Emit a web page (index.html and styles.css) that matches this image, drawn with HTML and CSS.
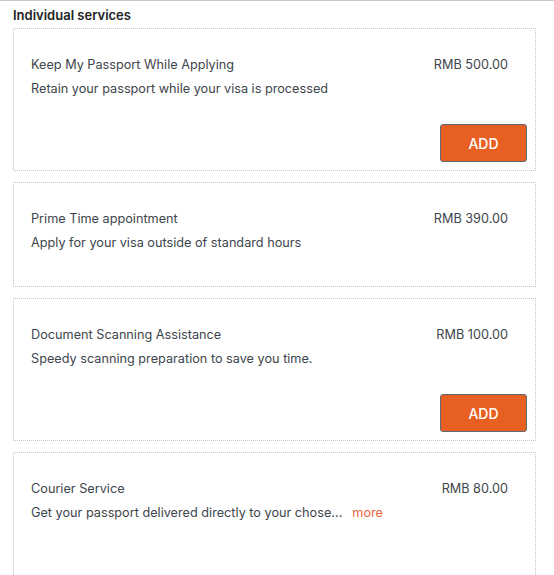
FILE: index.html
```html
<!DOCTYPE html>
<html>
<head>
<meta charset="utf-8">
<link rel="stylesheet" href="styles.css">
</head>
<body>
<div class="page">
  <h2 class="heading">Individual services</h2>
  <div class="list">
    <div class="card">
      <div class="info">
        <div class="row">
          <span class="title">Keep My Passport While Applying</span>
          <span class="price">RMB 500.00</span>
        </div>
        <div class="desc">Retain your passport while your visa is processed</div>
      </div>
      <div class="actions"><button class="add">ADD</button></div>
    </div>
    <div class="card">
      <div class="info">
        <div class="row">
          <span class="title">Prime Time appointment</span>
          <span class="price">RMB 390.00</span>
        </div>
        <div class="desc">Apply for your visa outside of standard hours</div>
      </div>
    </div>
    <div class="card">
      <div class="info">
        <div class="row">
          <span class="title">Document Scanning Assistance</span>
          <span class="price">RMB 100.00</span>
        </div>
        <div class="desc">Speedy scanning preparation to save you time.</div>
      </div>
      <div class="actions"><button class="add">ADD</button></div>
    </div>
    <div class="card">
      <div class="info">
        <div class="row">
          <span class="title">Courier Service</span>
          <span class="price">RMB 80.00</span>
        </div>
        <div class="desc">Get your passport delivered directly to your chose...<span class="more">more</span></div>
      </div>
      <div class="spacer"></div>
    </div>
  </div>
</div>
</body>
</html>
```
FILE: styles.css
```css
* { box-sizing: border-box; }
html, body { margin: 0; padding: 0; background: #fff; }
body {
  font-family: Inter, "Noto Sans", sans-serif;
  color: #3c4043;
  border-top: 1px solid #c8c8c8;
}
.page {
  padding: 6px 18px 0 13px;
}
.heading {
  margin: 0;
  font-size: 13px;
  font-weight: 600;
  line-height: 16px;
  color: #222;
}
.list {
  margin-top: 5px;
  display: flex;
  flex-direction: column;
  gap: 11px;
}
.card {
  border: 1px dotted #c4c4c4;
  padding: 8px;
}
.info {
  padding: 18px 19px 25px 9px;
}
.row {
  display: flex;
  justify-content: space-between;
  align-items: center;
  line-height: 20px;
}
.title, .price, .desc {
  font-size: 12.7px;
  color: #3d454c;
}
.desc {
  margin-top: 4px;
  line-height: 20px;
}
.more {
  color: #e8663d;
  margin-left: 10px;
}
.actions {
  display: flex;
  justify-content: flex-end;
}
.add {
  width: 87px;
  height: 38px;
  background: #e85f22;
  border: 1px solid #5d6b78;
  border-radius: 3px;
  color: #fff;
  font-family: Inter, "Noto Sans", sans-serif;
  font-size: 14px;
  font-weight: 500;
  padding: 0;
  cursor: pointer;
}
.spacer { height: 60px; }
```
